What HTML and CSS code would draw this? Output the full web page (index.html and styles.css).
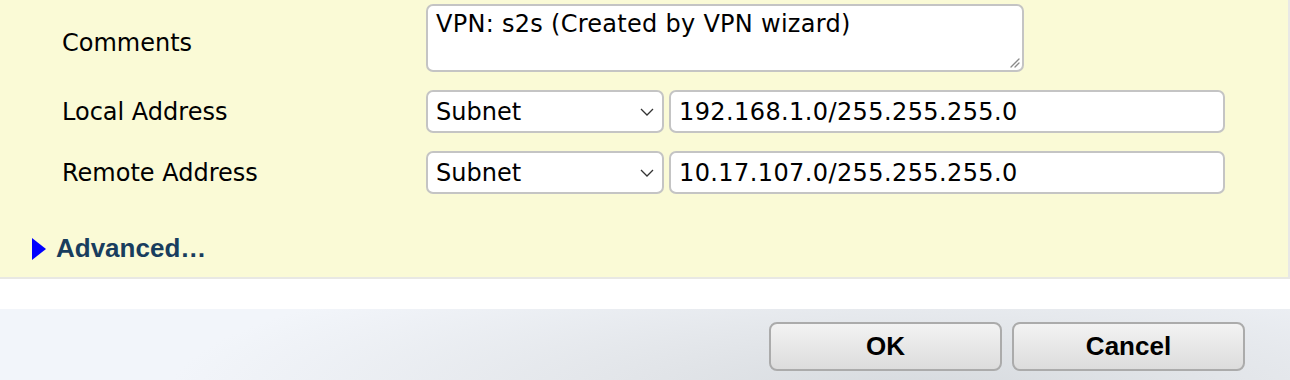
FILE: index.html
```html
<!DOCTYPE html>
<html>
<head>
<meta charset="utf-8">
<link rel="stylesheet" href="styles.css">
</head>
<body>
<div class="page">
  <div class="panel">
    <div class="form">
      <div class="label label-top">Comments</div>
      <div class="field">
        <div class="textarea-wrap">
          <div class="textarea">VPN: s2s (Created by VPN wizard)</div>
          <svg class="grip" width="12" height="12" viewBox="0 0 12 12"><path d="M11 3 L3 11 M11 7 L7 11" stroke="#8a8a8a" stroke-width="1.3" stroke-linecap="round"/></svg>
        </div>
      </div>
      <div class="label">Local Address</div>
      <div class="field row">
        <div class="select"><span>Subnet</span><svg class="chev" width="14" height="8" viewBox="0 0 14 8"><path d="M1 1 L7 7 L13 1" fill="none" stroke="#333" stroke-width="1.3"/></svg></div>
        <div class="input">192.168.1.0/255.255.255.0</div>
      </div>
      <div class="label">Remote Address</div>
      <div class="field row">
        <div class="select"><span>Subnet</span><svg class="chev" width="14" height="8" viewBox="0 0 14 8"><path d="M1 1 L7 7 L13 1" fill="none" stroke="#333" stroke-width="1.3"/></svg></div>
        <div class="input">10.17.107.0/255.255.255.0</div>
      </div>
    </div>
    <div class="advanced">
      <svg class="tri" width="14" height="22" viewBox="0 0 14 22"><path d="M0 0 L14 11 L0 22 Z" fill="#0000ff"/></svg>
      <span>Advanced…</span>
    </div>
  </div>
  <div class="gap"></div>
  <div class="footer">
    <button class="btn">OK</button>
    <button class="btn">Cancel</button>
  </div>
</div>
</body>
</html>
```
FILE: styles.css
```css
html, body {
  margin: 0;
  padding: 0;
  background: #ffffff;
}
.page {
  width: 1290px;
  height: 380px;
  overflow: hidden;
  display: flex;
  flex-direction: column;
}
.panel {
  background: #fafad6;
  box-sizing: border-box;
  border-right: 2px solid #e8e8e6;
  border-bottom: 2px solid #e8e8e4;
  height: 279px;
  padding-top: 4px;
}
.form {
  display: grid;
  grid-template-columns: 364px 1fr;
  row-gap: 18px;
  padding-left: 62px;
  font-family: "DejaVu Sans", Verdana, sans-serif;
  font-size: 24px;
  color: #000;
}
.label {
  display: flex;
  align-items: center;
}
.label-top {
  align-items: flex-start;
  padding-top: 25px;
}
.field {
  display: flex;
}
.row {
  gap: 5px;
}
.textarea-wrap {
  position: relative;
  width: 598px;
  height: 68px;
  box-sizing: border-box;
  background: #fff;
  border: 2px solid #c4c4c4;
  border-radius: 7px;
}
.textarea {
  padding: 3px 8px;
  line-height: 30px;
  letter-spacing: 0.28px;
}
.grip {
  position: absolute;
  right: 2px;
  bottom: 2px;
}
.select, .input {
  height: 43px;
  box-sizing: border-box;
  background: #fff;
  border: 2px solid #c4c4c4;
  border-radius: 7px;
  display: flex;
  align-items: center;
}
.select {
  width: 238px;
  padding: 0 8px 0 8px;
  justify-content: space-between;
}
.input {
  width: 556px;
  padding: 0 8px;
  letter-spacing: 0.4px;
}
.advanced {
  display: flex;
  align-items: center;
  gap: 10px;
  padding-left: 32px;
  margin-top: 39px;
  font-family: "Liberation Sans", Arial, Helvetica, sans-serif;
  font-weight: bold;
  font-size: 26px;
  color: #183d5e;
}
.gap {
  height: 30px;
  background: #fff;
}
.footer {
  flex: 1;
  background: radial-gradient(ellipse 760px 150px at 72% 120%, #d6dade 0%, #e2e5e9 40%, #f2f5fa 100%);
  display: flex;
  justify-content: flex-end;
  align-items: flex-start;
  gap: 10px;
  padding: 13px 45px 0 0;
}
.btn {
  width: 233px;
  height: 49px;
  border: 2px solid #ababab;
  border-radius: 8px;
  background: linear-gradient(#f3f3f3, #dcdcdc);
  font-family: "Liberation Sans", Arial, Helvetica, sans-serif;
  font-weight: bold;
  font-size: 26px;
  color: #000;
  padding: 0 0 1px 0;
}
```
